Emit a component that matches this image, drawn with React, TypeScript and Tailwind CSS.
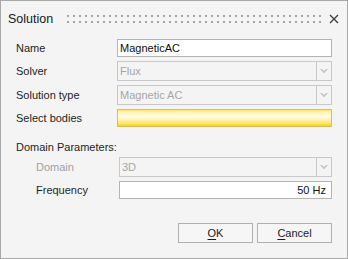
import React from "react";

const font = { fontFamily: '"Liberation Sans", Arial, sans-serif' };

function Arrow() {
  return (
    <svg width="8" height="5" viewBox="0 0 8 5" className="block">
      <polygon points="0,0 2,0 4,2 6,0 8,0 4,4.5" fill="#c4c4c4" />
    </svg>
  );
}

function Combo({ value }: { value: string }) {
  return (
    <div className="flex h-[20px] flex-1 border border-[#c8c8c8] bg-[#f4f4f4]">
      <div className="flex flex-1 items-center pl-[2px] text-[#a6a6a6]">{value}</div>
      <div className="flex w-[15px] items-center justify-center border-l border-[#c8c8c8]">
        <Arrow />
      </div>
    </div>
  );
}

export default function App() {
  const dots = Array.from({ length: 43 }, (_, i) => i);
  return (
    <div
      className="box-border flex h-[259px] w-[348px] flex-col border border-[#a8a8a8] bg-[#f4f4f4] px-[15px] text-[11px] text-[#1e1e1e]"
      style={font}
    >
      {/* title bar */}
      <div className="relative -mx-[15px] flex h-[37px] items-center pl-[7px]">
        <span className="text-[12.5px] text-[#1a1a1a]">Solution</span>
        <svg className="absolute left-[66px] top-[14px]" width="256" height="8">
          {dots.map((i) => (
            <g key={i}>
              <rect x={i * 6} y={0} width="2" height="2" fill="#a4a4a4" />
              <rect x={i * 6} y={6} width="2" height="2" fill="#a4a4a4" />
            </g>
          ))}
        </svg>
        <svg className="absolute left-[328px] top-[13px]" width="10" height="10" viewBox="0 0 10 10">
          <path d="M1 1 L9 9 M9 1 L1 9" stroke="#3c3c3c" strokeWidth="1.3" />
        </svg>
      </div>

      <div className="mt-[1px] flex h-[18px] items-center">
        <div className="w-[101px]">Name</div>
        <div className="flex h-[18px] flex-1 items-center border border-[#b4b4b4] bg-white pl-[2px] text-[#101010]">
          MagneticAC
        </div>
      </div>

      <div className="mt-[4px] flex h-[20px] items-center">
        <div className="w-[101px]">Solver</div>
        <Combo value="Flux" />
      </div>

      <div className="mt-[4px] flex h-[20px] items-center">
        <div className="w-[101px]">Solution type</div>
        <Combo value="Magnetic AC" />
      </div>

      <div className="mt-[4px] flex h-[18px] items-center">
        <div className="w-[101px]">Select bodies</div>
        <div className="h-[18px] flex-1 border border-[#d9bf5a] bg-[linear-gradient(to_bottom,#ffe45e_0%,#fff3b8_15%,#fffbe6_40%,#fff1a8_65%,#ffe040_90%,#f8cc10_100%)]" />
      </div>

      <div className="mt-[11px] flex h-[19px] items-center">Domain Parameters:</div>

      <div className="flex h-[20px] items-center">
        <div className="w-[103px] pl-[20px] text-[#a0a0a0]">Domain</div>
        <Combo value="3D" />
      </div>

      <div className="mt-[4px] flex h-[18px] items-center">
        <div className="w-[103px] pl-[20px]">Frequency</div>
        <div className="flex h-[18px] flex-1 items-center justify-end border border-[#b4b4b4] bg-white pr-[5px] text-[#101010]">
          50 Hz
        </div>
      </div>

      <div className="mt-[24px] flex justify-end gap-[4px]">
        <button className="flex h-[20px] w-[75px] items-center justify-center border border-[#b0b0b0] bg-[#f6f6f6] text-[#1a1a1a]">
          <span className="underline underline-offset-2">O</span>K
        </button>
        <button className="flex h-[20px] w-[75px] items-center justify-center border border-[#b0b0b0] bg-[#f6f6f6] text-[#1a1a1a]">
          <span className="underline underline-offset-2">C</span>ancel
        </button>
      </div>
    </div>
  );
}
